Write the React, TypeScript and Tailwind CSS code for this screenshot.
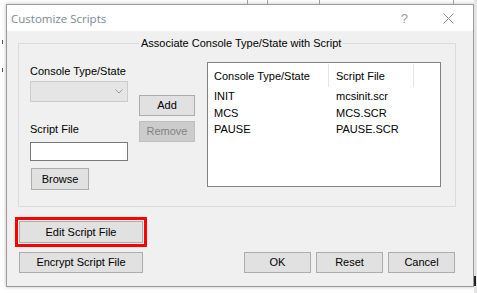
import React from "react";

const font = { fontFamily: '"Liberation Sans", Arial, sans-serif' };

function Btn({
  children,
  w,
  h = "h-[21px]",
  disabled = false,
  extra = "",
}: {
  children: React.ReactNode;
  w: string;
  h?: string;
  disabled?: boolean;
  extra?: string;
}) {
  return (
    <div
      className={`${w} ${h} ${extra} flex items-center justify-center border text-[11px] leading-none ${
        disabled
          ? "bg-[#cccccc] border-[#bfbfbf] text-[#838383]"
          : "bg-[#e1e1e1] border-[#adadad] text-black"
      }`}
    >
      {children}
    </div>
  );
}

export default function App() {
  const rows = [
    ["INIT", "mcsinit.scr"],
    ["MCS", "MCS.SCR"],
    ["PAUSE", "PAUSE.SCR"],
  ];
  return (
    <div
      className="relative w-[477px] h-[293px] bg-white overflow-hidden"
      style={font}
    >
      {/* background window fragments */}
      <div className="absolute left-[247px] top-0 w-px h-[4px] bg-[#a0a0a0]" />
      <div className="absolute left-[267px] top-0 w-px h-[4px] bg-[#a0a0a0]" />
      <div className="absolute left-[319px] top-0 w-px h-[4px] bg-[#a0a0a0]" />
      <div className="absolute left-[453px] top-0 w-px h-[4px] bg-[#a0a0a0]" />
      <div className="absolute right-0 top-0 w-[3px] h-[293px] bg-[#e4e4e4]" />
      <div className="absolute right-[1px] top-[276px] w-[2px] h-[10px] bg-[#222]" />
      <div className="absolute left-[2px] top-[40px] w-px h-[4px] bg-[#555]" />
      <div className="absolute left-[2px] top-[68px] w-px h-[4px] bg-[#555]" />

      <div className="ml-[6px] pt-[4px]">
        <div className="w-[468px] h-[283px] border border-[#9a9a9a] shadow-[0_0_4px_rgba(0,0,0,0.25)] flex flex-col">
          {/* title bar */}
          <div className="h-[26px] bg-white flex items-center pl-[4px] pt-[1px]">
            <span
              className="text-[12px] text-[#7d8794]"
              style={{ fontFamily: '"Open Sans", "Liberation Sans", sans-serif', fontSize: "11.5px" }}
            >
              Customize Scripts
            </span>
            <span className="ml-auto mr-[35px] text-[13px] text-[#9a9a9a] leading-none">
              ?
            </span>
            <svg width="11" height="11" viewBox="0 0 11 11" className="mr-[19px]">
              <path d="M0.5 0.5 L10.5 10.5 M10.5 0.5 L0.5 10.5" stroke="#8f8f8f" strokeWidth="1" />
            </svg>
          </div>

          {/* content */}
          <div className="flex-1 bg-[#f0f0f0] flex flex-col">
            {/* group box */}
            <div className="relative ml-[11px] mt-[12px] w-[438px] h-[164px] border border-[#dcdcdc]">
              <span className="absolute left-[120px] top-[-8px] px-[2px] bg-[#f0f0f0] text-[11px] leading-[14px] text-black whitespace-nowrap">
                Associate Console Type/State with Script
              </span>
              <div className="flex">
                {/* left column */}
                <div className="ml-[11px] w-[98px] flex flex-col">
                  <div className="mt-[20px] h-[14px] leading-[14px] text-[11px] text-black whitespace-nowrap">
                    Console Type/State
                  </div>
                  <div className="mt-[3px] h-[21px] w-[98px] bg-[#e5e5e5] border border-[#cccccc] flex items-center justify-end pr-[4px]">
                    <svg width="8" height="5" viewBox="0 0 8 5">
                      <path d="M0.5 0.5 L4 4 L7.5 0.5" stroke="#9a9a9a" fill="none" strokeWidth="1" />
                    </svg>
                  </div>
                  <div className="mt-[20px] h-[14px] leading-[14px] text-[11px] text-black">
                    Script File
                  </div>
                  <div className="mt-[6px] h-[19px] w-[98px] bg-white border border-[#7a7a7a]" />
                  <Btn w="w-[58px]" h="h-[22px]" extra="mt-[7px] ml-[1px]">
                    Browse
                  </Btn>
                </div>

                {/* middle buttons */}
                <div className="ml-[11px] flex flex-col">
                  <Btn w="w-[56px]" extra="mt-[51px]">
                    Add
                  </Btn>
                  <Btn w="w-[56px]" extra="mt-[5px]" disabled>
                    Remove
                  </Btn>
                </div>

                {/* list */}
                <div className="ml-[12px] mt-[18px] w-[234px] h-[125px] bg-white border border-[#828282] flex flex-col text-[11px] text-black">
                  <div className="flex h-[24px] pt-[1px]">
                    <div className="w-[121px] border-r border-[#e5e5e5] pl-[6px] pt-[5px] leading-[14px] whitespace-nowrap">
                      Console Type/State
                    </div>
                    <div className="w-[85px] border-r border-[#e5e5e5] pl-[7px] pt-[5px] leading-[14px]">
                      Script File
                    </div>
                  </div>
                  <div className="mt-[1px] flex flex-col">
                    {rows.map(([a, b]) => (
                      <div key={a} className="flex h-[16.5px] leading-[16.5px]">
                        <div className="w-[121px] pl-[6px]">{a}</div>
                        <div className="pl-[7px]">{b}</div>
                      </div>
                    ))}
                  </div>
                </div>
              </div>
            </div>

            {/* Edit Script File highlighted */}
            <div className="ml-[8px] mt-[10px] w-[132px] h-[30px] border-[3px] border-[#ff0000] p-[1px]">
              <Btn w="w-[124px]" h="h-[22px]">
                Edit Script File
              </Btn>
            </div>

            {/* bottom row */}
            <div className="mt-[5px] flex">
              <Btn w="w-[124px]" extra="ml-[12px]">
                Encrypt Script File
              </Btn>
              <Btn w="w-[67px]" extra="ml-[101px]">
                OK
              </Btn>
              <Btn w="w-[67px]" extra="ml-[5px]">
                Reset
              </Btn>
              <Btn w="w-[67px]" extra="ml-[5px]">
                Cancel
              </Btn>
            </div>
          </div>
        </div>
      </div>
    </div>
  );
}
